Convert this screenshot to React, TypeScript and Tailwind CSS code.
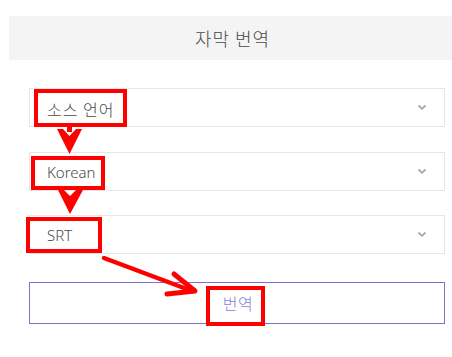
import React from "react";

const Chevron = () => (
  <svg width="10" height="7" viewBox="0 0 10 7" className="shrink-0">
    <path d="M1.5 1.5 L5 4.8 L8.5 1.5" fill="none" stroke="#a8a8a8" strokeWidth="1.8" />
  </svg>
);

const Select = ({ label, ko }: { label: string; ko?: boolean }) => (
  <div className="h-[39px] border border-[#e6e6e6] bg-white flex items-center justify-between pl-[17px] pr-[17px]">
    <span
      className={
        ko
          ? "text-[16px] text-[#4a4a4a] leading-none font-light tracking-[1px] pt-[2px]"
          : "text-[15px] text-[#4a4a4a] leading-none font-light pt-[1px]"
      }
      style={ko ? { fontFamily: '"Noto Sans CJK KR", sans-serif' } : undefined}
    >
      {label}
    </span>
    <Chevron />
  </div>
);

export default function App() {
  return (
    <div
      className="relative w-[452px] h-[357px] bg-white overflow-hidden pt-[16px]"
      style={{ fontFamily: '"Noto Sans", "Noto Sans CJK KR", sans-serif' }}
    >
      <div className="ml-[9px] h-[44px] bg-[#f4f4f4] flex items-center justify-center">
        <span className="text-[18px] text-[#4a4a4a] font-light tracking-[1px] pl-[4px]" style={{ fontFamily: '"Noto Sans CJK KR", sans-serif' }}>
          자막 번역
        </span>
      </div>

      <div className="ml-[29px] mr-[7px] mt-[28px] flex flex-col">
        <Select label="소스 언어" ko />
        <div className="mt-[25px]">
          <Select label="Korean" />
        </div>
        <div className="mt-[24px]">
          <Select label="SRT" />
        </div>
        <button className="mt-[28px] h-[42px] border border-[#7d70d8] bg-white flex items-center justify-center">
          <span className="text-[16px] text-[#8a7fd9] font-light tracking-[0.5px] pl-[2px]" style={{ fontFamily: '"Noto Sans CJK KR", sans-serif' }}>
            번역
          </span>
        </button>
      </div>

      {/* annotation boxes */}
      <div className="absolute left-[34px] top-[89px] w-[93px] h-[38px] border-[4px] border-[#f00]" />
      <div className="absolute left-[31px] top-[156px] w-[74px] h-[34px] border-[4px] border-[#f00]" />
      <div className="absolute left-[26px] top-[217px] w-[76px] h-[36px] border-[4px] border-[#f00]" />
      <div className="absolute left-[206px] top-[286px] w-[59px] h-[40px] border-[4px] border-[#f00]" />

      {/* arrows */}
      <svg className="absolute left-0 top-0" width="452" height="357" viewBox="0 0 452 357">
        <rect x="67" y="126" width="5" height="6" fill="#f00" />
        <polygon points="57,129 63,129 69.5,136 76,129 82,129 69.5,154" fill="#f00" />
        <polygon points="58,190 64,190 70,196 76,190 83,190 70,214" fill="#f00" />
        <line x1="104" y1="258" x2="192" y2="291" stroke="#f00" strokeWidth="4.5" strokeLinecap="round" />
        <polyline points="174,274 195,291 167,294" fill="none" stroke="#f00" strokeWidth="5" strokeLinecap="round" strokeLinejoin="round" />
      </svg>
    </div>
  );
}
